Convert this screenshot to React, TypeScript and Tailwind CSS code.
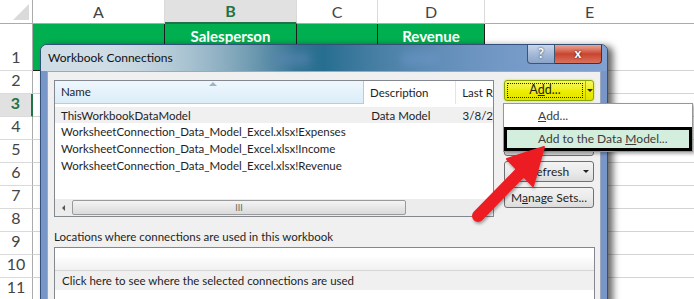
import React from "react";

const ROWS = [2, 3, 4, 5, 6, 7, 8, 9, 10, 11];

const Sheet = () => {
  return (
    <div className="grid grid-cols-[33px_132px_132px_81px_107px_1fr] grid-rows-[24px_47px_repeat(10,23px)] font-['Lato',sans-serif] text-[16px] text-[#444]">
      {/* corner */}
      <div className="relative border-r border-b border-[#ababab] bg-white">
        <div className="absolute right-[3px] bottom-[3px] w-0 h-0 border-l-[16px] border-l-transparent border-b-[16px] border-b-[#dadada]" />
      </div>
      <div className="flex items-center justify-center border-r border-b border-[#dadada] border-b-[#ababab] bg-white">A</div>
      <div className="flex items-center justify-center border-r border-[#dadada] border-b-2 border-b-[#217346] bg-[#e1e1e1] font-bold text-[#217346]">B</div>
      <div className="flex items-center justify-center border-r border-b border-[#dadada] border-b-[#ababab] bg-white">C</div>
      <div className="flex items-center justify-center border-r border-b border-[#dadada] border-b-[#ababab] bg-white">D</div>
      <div className="flex items-center justify-center border-b border-[#ababab] bg-white">E</div>

      {/* row 1 - the header row sits mostly under the dialog */}
      <div className="flex items-end justify-center pb-[1px] border-r border-b border-[#dadada] border-r-[#ababab] bg-white">1</div>
      <div className="border-r border-b border-[#1f1f1f] bg-[#00b050]" />
      <div className="flex justify-center pt-[3px] leading-[19px] border-r border-b border-[#1f1f1f] bg-[#00b050] font-bold text-white text-[15px]">
        Salesperson
      </div>
      <div className="border-r border-b border-[#1f1f1f] bg-[#00b050]" />
      <div className="flex justify-center pt-[3px] leading-[19px] border-r border-b border-[#1f1f1f] bg-[#00b050] font-bold text-white text-[15px]">
        Revenue
      </div>
      <div className="border-b border-[#d4d4d4] bg-white" />

      {ROWS.map((r) => (
        <React.Fragment key={r}>
          <div
            className={
              r === 3
                ? "flex items-end justify-center pb-[1px] border-b border-[#dadada] border-r-2 border-r-[#217346] bg-[#e1e1e1] font-bold text-[#217346]"
                : "flex items-end justify-center pb-[1px] border-r border-b border-[#dadada] border-r-[#ababab] bg-white"
            }
          >
            {r}
          </div>
          <div className="border-r border-b border-[#d4d4d4]" />
          <div className="border-r border-b border-[#d4d4d4]" />
          <div className="border-r border-b border-[#d4d4d4]" />
          <div className="border-r border-b border-[#d4d4d4]" />
          <div className="border-b border-[#d4d4d4]" />
        </React.Fragment>
      ))}
    </div>
  );
};

const Btn = ({ children, className = "" }: { children?: React.ReactNode; className?: string }) => (
  <div
    className={`flex h-[21px] items-center justify-center rounded-[3px] border border-[#707070] bg-gradient-to-b from-[#f3f3f3] via-[#ebebeb] to-[#dcdcdc] ${className}`}
  >
    {children}
  </div>
);

const Dialog = () => {
  return (
    <div className="absolute left-[40px] top-[44px] flex h-[270px] w-[568px] flex-col rounded-t-[7px] border border-[#34507a] bg-[#7896c8] px-[6px] shadow-[5px_2px_7px_rgba(0,0,0,0.6)] font-['Lato',sans-serif] text-[11.5px] text-[#1e1e1e]">
      {/* title bar */}
      <div className="relative -mx-[6px] h-[26px] rounded-t-[6px] bg-gradient-to-r from-[#d3e0e8] via-[#1f6a8a] to-[#8aa7d3]">
        <div className="absolute inset-0 rounded-t-[6px] bg-gradient-to-r from-[#cfdde6] from-10% via-transparent via-45% to-[#7d9fd0]/70 to-90%" />
        <div className="absolute left-[230px] top-[8px] h-[12px] w-[40px] rounded-full bg-[#5b86b4]/60 blur-[4px]" />
        <div className="absolute left-[360px] top-[8px] h-[12px] w-[40px] rounded-full bg-[#6a95c8]/60 blur-[4px]" />
        <div className="absolute left-[7px] top-[5px] text-[12px] leading-[16px] text-[#111]">Workbook Connections</div>
        <div className="absolute right-[5px] top-0 flex">
          <div className="flex h-[19px] w-[28px] items-center justify-center rounded-bl-[4px] border border-t-0 border-[#3d5574] bg-gradient-to-b from-[#c9d7ea] via-[#a5bad8] to-[#8aa3c7] text-[13px] font-bold text-white [text-shadow:0_0_2px_#223]">?</div>
          <div className="flex h-[19px] w-[47px] items-center justify-center rounded-br-[4px] border border-l-0 border-t-0 border-[#5a2a22] bg-gradient-to-b from-[#e9a596] via-[#c9442f] to-[#d8715c] text-[13px] font-bold text-white [text-shadow:0_0_2px_#311]">x</div>
        </div>
      </div>

      {/* client */}
      <div className="flex-1 border border-[#9aa9bf] bg-[#f0f0f0] pl-[6px] pt-[8px]">
        <div className="flex gap-[10px]">
          {/* list view */}
          <div className="relative h-[137px] w-[440px] border border-[#828790] bg-white">
            <div className="flex h-[23px] items-center">
              <div className="relative flex h-full w-[312px] items-center border-r border-b border-[#a6d2f0] bg-gradient-to-b from-[#eef7fd] to-[#dcedf9] pl-[6px]">
                Name
                <div className="absolute left-[154px] top-[1px] h-0 w-0 border-x-[4px] border-b-[4px] border-x-transparent border-b-[#9bb4cc]" />
              </div>
              <div className="flex h-full w-[93px] items-center border-r border-[#e3e3e3] pl-[6px]">Description</div>
              <div className="flex h-full items-center pl-[6px] whitespace-nowrap">Last R</div>
            </div>
            <div className="pt-[3px] leading-[17px]">
              <div className="flex h-[16px] items-center bg-[#f0f0f0]">
                <span className="w-[312px] pl-[6px]">ThisWorkbookDataModel</span>
                <span className="w-[93px] pl-[6px]">Data Model</span>
                <span className="pl-[5px]">3/8/2</span>
              </div>
              <div className="flex h-[17px] items-center pl-[6px]">WorksheetConnection_Data_Model_Excel.xlsx!Expenses</div>
              <div className="flex h-[17px] items-center pl-[6px]">WorksheetConnection_Data_Model_Excel.xlsx!Income</div>
              <div className="flex h-[17px] items-center pl-[6px]">WorksheetConnection_Data_Model_Excel.xlsx!Revenue</div>
            </div>
            {/* horizontal scrollbar */}
            <div className="absolute bottom-0 left-0 right-0 flex h-[17px] items-center bg-[#ececec]">
              <div className="flex h-full w-[17px] items-center justify-center">
                <div className="h-0 w-0 border-y-[3px] border-r-[3px] border-y-transparent border-r-[#555]" />
              </div>
              <div className="flex h-[15px] w-[334px] items-center justify-center rounded-[2px] border border-[#9a9a9a] bg-gradient-to-b from-[#f4f4f4] to-[#dadada] text-[9px] leading-none text-[#666]">III</div>
              <div className="flex-1" />
              <div className="flex h-full w-[17px] items-center justify-center">
                <div className="h-0 w-0 border-y-[3px] border-l-[3px] border-y-transparent border-l-[#555]" />
              </div>
            </div>
          </div>

          {/* buttons */}
          <div className="flex w-[90px] flex-col text-[12px]">
            <div className="flex h-[21px] rounded-[3px] border border-[#8aa400] bg-gradient-to-b from-[#f8f85a] via-[#eeee00] to-[#e2e200] text-[12.5px] shadow-[0_0_2px_#c8d800]">
              <div className="m-[2px] flex flex-1 items-center justify-center border border-dotted border-[#222]">
                A<span className="underline">d</span>d...
              </div>
              <div className="flex w-[8px] items-center justify-center border-l border-[#b5b500]">
                <div className="h-0 w-0 border-x-[3px] border-t-[3px] border-x-transparent border-t-[#222]" />
              </div>
            </div>
            {/* Remove and Properties sit under the open menu */}
            <Btn className="mt-[7px]" />
            <Btn className="mt-[6px]" />
            <Btn className="relative mt-[5px]">
              <span className="underline">R</span>efresh
              <div className="absolute right-[4px] top-[8px] h-0 w-0 border-x-[3px] border-t-[3px] border-x-transparent border-t-[#222]" />
            </Btn>
            <Btn className="mt-[5px]">
              M<span className="underline">a</span>nage Sets...
            </Btn>
          </div>
        </div>

        <div className="mt-[12px] h-[16px] leading-[16px]">Locations where connections are used in this workbook</div>

        <div className="mt-[2px] h-[60px] w-[541px] border border-[#828790] bg-white">
          <div className="mt-[9px] h-[14px] border-b border-[#d6d6d6] bg-gradient-to-b from-[#fdfdfd] to-[#f1f1f1]" />
          <div className="flex h-[19px] items-center bg-[#f0f0f0] pl-[7px]">Click here to see where the selected connections are used</div>
        </div>
      </div>
    </div>
  );
};

const Menu = () => (
  <div className="absolute left-[503px] top-[103px] h-[49px] w-[190px] border border-[#979797] bg-white shadow-[2px_2px_3px_rgba(0,0,0,0.3)] font-['Lato',sans-serif] text-[12px] text-[#3c3c3c]">
    <div className="flex h-[23px] items-center pl-[34px]">
      <span className="underline">A</span>dd...
    </div>
    <div className="flex h-[24px] items-center border-[3px] border-black bg-[#d4eedd] pl-[31px]">
      Add to the Data <span className="ml-[3px] underline">M</span>odel...
    </div>
  </div>
);

const Arrow = () => (
  <svg className="pointer-events-none absolute left-0 top-0" width="694" height="299">
    <defs>
      <filter id="sh" x="-20%" y="-20%" width="140%" height="140%">
        <feDropShadow dx="1" dy="2" stdDeviation="1.5" floodColor="#000" floodOpacity="0.35" />
      </filter>
    </defs>
    <g filter="url(#sh)" fill="#ec1c24" stroke="#ec1c24">
      <line x1="478" y1="216" x2="521" y2="172" strokeWidth="12" strokeLinecap="round" />
      <polygon points="544,147 507,159 533,186" strokeWidth="2" strokeLinejoin="round" />
    </g>
  </svg>
);

export default function App() {
  return (
    <div className="relative h-[299px] w-[694px] overflow-hidden bg-white">
      <Sheet />
      <Dialog />
      <Menu />
      <Arrow />
    </div>
  );
}
